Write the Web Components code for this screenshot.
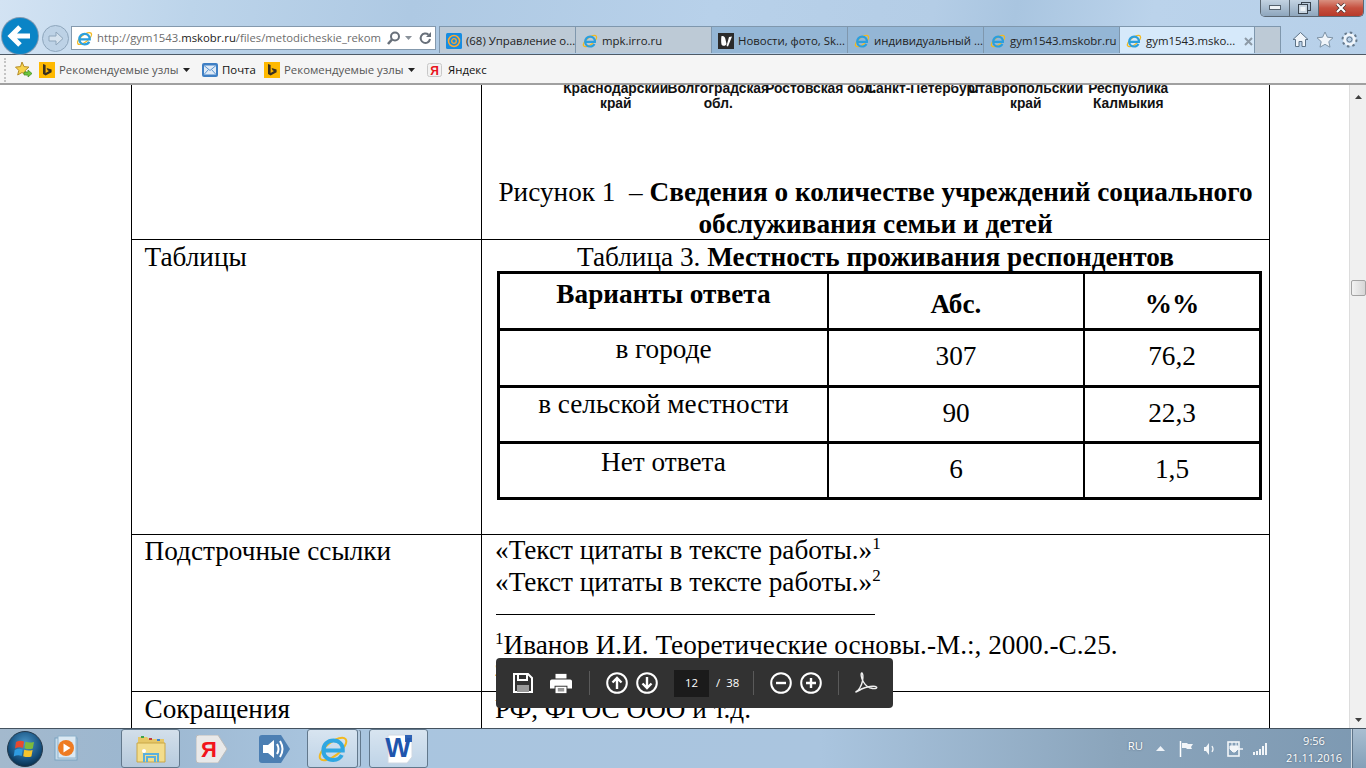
<!DOCTYPE html>
<html lang="ru">
<head>
<meta charset="utf-8">
<title>gym1543.mskobr.ru</title>
<style>
html,body{margin:0;padding:0;height:100%;overflow:hidden;background:#fff}
body{font-family:"Open Sans","Liberation Sans",sans-serif}
</style>
</head>
<body>
<ie-window>
    <ie-toolbar></ie-toolbar>
    <ie-favbar></ie-favbar>
    <doc-view>
        <doc-row style="height:154px">
            <div slot="right" class="chart-block">
                <chart-labels></chart-labels>
                <fig-caption lead="Рисунок 1  – " title1="Сведения о количестве учреждений социального" title2="обслуживания семьи и детей"></fig-caption>
            </div>
        </doc-row>
        <doc-row label="Таблицы" style="height:294px">
            <resp-table slot="right"></resp-table>
        </doc-row>
        <doc-row label="Подстрочные ссылки" style="height:156px;--lab:0">
            <foot-notes slot="right"></foot-notes>
        </doc-row>
        <doc-row label="Сокращения" style="height:40px">
            <plain-text slot="right">РФ, ФГОС ООО и т.д.</plain-text>
        </doc-row>
    </doc-view>
    <pdf-bar></pdf-bar>
    <win-taskbar></win-taskbar>
</ie-window>

<script>
const ieIcon = (s = 16) => `<svg width="${s}" height="${s}" viewBox="0 0 16 16" style="flex:none;display:block">
    <ellipse cx="8" cy="8" rx="8" ry="3.400" transform="rotate(-38 8 8)" fill="none" stroke="#f2b91f" stroke-width="1.200"/>
    <path d="M3.400 8.800h9.500c.2-3-1.800-5.100-4.700-5.100-2.900 0-5 2.100-5 5s2.100 4.800 4.900 4.800c2 0 3.600-1 4.300-2.500" fill="none" stroke="#2b9fdd" stroke-width="2.200"/>
</svg>`

const bingIcon = `<svg width="16" height="16" viewBox="0 0 16 16" style="flex:none;display:block">
    <rect width="16" height="16" fill="#ffb900"/>
    <path d="M4 2l2.600 1v8l3.400-2-1.500-.8-.9-2.300 5 1.700v2.600L6.600 13.500 4 12z" fill="#3a3020"/>
</svg>`

customElements.define("ie-window", class extends HTMLElement{
    constructor(){
        super()
        this.attachShadow({mode: "open"}).innerHTML = `
            <style>
            :host{display:flex;flex-direction:column;position:relative;width:1366px;height:768px;overflow:hidden}
            </style>
            <slot></slot>`
    }
})

customElements.define("ie-toolbar", class extends HTMLElement{
    constructor(){
        super()
        const tabs = [
            {text: "(68) Управление о...", kind: "mail", cls: "idle"},
            {text: "mpk.irro.ru", kind: "ie", cls: "idle"},
            {text: "Новости, фото, Sk...", kind: "sky", cls: "dark"},
            {text: "индивидуальный ...", kind: "ie", cls: "dark"},
            {text: "gym1543.mskobr.ru", kind: "ie", cls: "dark"},
            {text: "gym1543.msko...", kind: "ie", cls: "active"}
        ]
        const icon = {
            ie: ieIcon(),
            mail: `<svg width="16" height="16" viewBox="0 0 16 16" style="flex:none"><rect width="16" height="16" rx="1.500" fill="#168de2"/><circle cx="8" cy="8" r="5.500" fill="none" stroke="#ffa930" stroke-width="1.500"/><circle cx="8" cy="8" r="2.300" fill="none" stroke="#ffa930" stroke-width="1.300"/></svg>`,
            sky: `<svg width="16" height="16" viewBox="0 0 16 16" style="flex:none"><rect width="16" height="16" fill="#2b2b2b"/><path d="M3.500 3c2.500-.5 3.500 1 4 3.500L8.500 11c-.5 2-4 2.500-5 .5C3 9 3 5.500 3.500 3zM11 4l3-.5-4 10-1.500-.5z" fill="#fff"/></svg>`
        }
        let html = ""
        for(let i = 0; i < tabs.length; i++){
            html += `<div class="tab ${tabs[i].cls}">${icon[tabs[i].kind]}<span>${tabs[i].text}</span>${tabs[i].cls === "active" ? `<svg class="x" width="9" height="9" viewBox="0 0 9 9"><path d="M1 1l7 7M8 1L1 8" stroke="#8d9aa6" stroke-width="2"/></svg>` : ""}</div>`
        }
        this.attachShadow({mode: "open"}).innerHTML = `
            <style>
            :host{display:block;position:relative;height:54px;flex:none;border-bottom:1px solid #4e5a66;
                background:linear-gradient(100deg,#d3e3f3 0,#bcd4ea 14%,#aec9e3 30%,#b8d1ea 52%,#b4cde6 68%,#a9c5e0 74%,#bbd3eb 84%,#b7d0e9 100%);
                font:11.400px/16px "Open Sans",sans-serif;color:#1c1c1c}
            .row{position:absolute;left:0;right:0;top:26px;height:28px;display:flex}
            .nav{width:71px;flex:none;position:relative}
            .back{position:absolute;left:2px;top:-8px;width:36px;height:36px;border-radius:50%;background:#0a84c6;box-shadow:0 0 0 1px #7e99b2;overflow:hidden}
            .fwd{position:absolute;left:42px;top:-1px;width:25px;height:25px;border-radius:50%;border:1px solid #8ea6bc;background:#bdd2e6}
            .addr{width:363px;height:22px;flex:none;border:1px solid #8499ad;background:#fff;display:flex;align-items:center;color:#6d6d6d;font-size:11.300px;white-space:nowrap;overflow:hidden}
            .addr .e{margin:0 4px 0 4px}
            .url{width:285px;overflow:hidden}
            .url b{font-weight:400;color:#1a1a1a}
            .ctrl{display:flex;align-items:center;margin-left:5px;gap:4px}
            .tabs{display:flex;margin-left:3px}
            .tab{width:136px;height:27px;border:solid #7f97ad;border-width:1px 0 0 1px;display:flex;align-items:center;gap:4px;padding:2px 0 0 6px;box-sizing:border-box;white-space:nowrap;overflow:hidden;color:#222}
            .idle{background:#bdcad6}
            .dark{background:#94b6d5}
            .active{background:#d6e9fa;width:135px}
            .x{margin-left:5px}
            .new{width:27px;height:27px;background:#bdcad6;border:solid #7f97ad;border-width:1px 1px 0 1px;box-sizing:border-box}
            .tools{display:flex;align-items:center;gap:7px;margin-left:11px;height:27px}
            .caption{position:absolute;right:2px;top:0;height:17px;width:104px;display:flex;border:1px solid #5b6874;border-top:0;border-radius:0 0 5px 5px;overflow:hidden;box-sizing:border-box}
            .caption div{display:flex;align-items:center;justify-content:center;border-right:1px solid #5b6874;background:linear-gradient(#c3d3e2,#8ea6bd)}
            .min,.max{width:28px}
            .caption .close{flex:1;border-right:0;background:linear-gradient(#d99080 0,#c6503f 50%,#b73a2b 100%)}
            </style>
            <div class="caption">
                <div class="min"><svg width="12" height="6"><rect x=".5" y=".5" width="11" height="4" fill="#eef3f7" stroke="#55626e"/></svg></div>
                <div class="max"><svg width="13" height="12"><rect x="3.500" y=".5" width="9" height="8" fill="none" stroke="#39444f"/><rect x=".5" y="2.500" width="9" height="9" fill="#c9d6e2" stroke="#39444f"/><rect x="2.500" y="5" width="5" height="4" fill="#eef3f7"/></svg></div>
                <div class="close"><svg width="12" height="10"><path d="M2 1l8 8M10 1L2 9" stroke="#3b2a28" stroke-width="3.400"/><path d="M2 1l8 8M10 1L2 9" stroke="#fff" stroke-width="2.200"/></svg></div>
            </div>
            <div class="row">
                <div class="nav">
                    <div class="back">
                        <svg width="36" height="36" viewBox="0 0 36 36"><path d="M9 18h19M18 9l-9 9 9 9" fill="none" stroke="#fff" stroke-width="5"/></svg>
                    </div>
                    <div class="fwd">
                        <svg width="25" height="25" viewBox="0 0 25 25"><path d="M6 10h7V6l7 6.500-7 6.500v-4H6z" fill="#d5e2ee" stroke="#8ea6bc"/></svg>
                    </div>
                </div>
                <div class="addr">
                    <span class="e">${ieIcon(17)}</span>
                    <span class="url">http://gym1543.<b>mskobr.ru</b>/files/metodicheskie_rekom</span>
                    <span class="ctrl">
                        <svg width="14" height="14" viewBox="0 0 14 14"><circle cx="8" cy="5.500" r="4" fill="none" stroke="#68707a" stroke-width="2"/><path d="M5 8.500L1 13" stroke="#68707a" stroke-width="2.600"/></svg>
                        <svg width="7" height="4"><path d="M0 0h7L3.500 4z" fill="#8a929a"/></svg>
                        <svg width="13" height="14" viewBox="0 0 13 14" style="margin-left:3px"><path d="M11 8a4.700 4.700 0 1 1-1.500-4.300" fill="none" stroke="#68707a" stroke-width="2"/><path d="M12 1v5H7z" fill="#68707a"/></svg>
                    </span>
                </div>
                <div class="tabs">${html}<div class="new"></div></div>
                <div class="tools">
                    <svg width="17" height="17" viewBox="0 0 17 17"><path d="M8.500 1.500L1 8.500h2.500V15.500h3.500v-5h3v5h3.500V8.500H16z" fill="#f0f5fa" stroke="#5e7387"/></svg>
                    <svg width="18" height="17" viewBox="0 0 18 17"><path d="M9 1l2.400 5.200 5.600.6-4.200 3.800 1.200 5.600L9 13.300l-5 2.900 1.200-5.600L1 6.800l5.600-.6z" fill="#f0f5fa" stroke="#7e93a6"/></svg>
                    <svg width="17" height="17" viewBox="0 0 17 17"><circle cx="8.500" cy="8.500" r="5" fill="none" stroke="#f0f5fa" stroke-width="3"/><circle cx="8.500" cy="8.500" r="7" fill="none" stroke="#66798b" stroke-width="2" stroke-dasharray="2.500 3"/><circle cx="8.500" cy="8.500" r="2.500" fill="none" stroke="#66798b"/></svg>
                </div>
            </div>`
    }
})

customElements.define("ie-favbar", class extends HTMLElement{
    constructor(){
        super()
        const caret = `<svg width="7" height="4"><path d="M0 0h7L3.500 4z" fill="#222"/></svg>`
        this.attachShadow({mode: "open"}).innerHTML = `
            <style>
            :host{display:flex;align-items:center;height:27px;padding:1px 0 0 4px;flex:none;background:#f5f5f5;border-bottom:2px solid #a0a0a0;font:11.400px/16px "Open Sans",sans-serif;color:#555;white-space:nowrap}
            .grip{width:0;height:24px;border-left:2px dotted #c4c4c4;margin-right:9px}
            .item{display:flex;align-items:center;gap:4px}
            .dark{color:#111}
            svg text{font:bold 12px "Liberation Sans",sans-serif;fill:#e8141c}
            </style>
            <div class="grip"></div>
            <svg width="17" height="17" viewBox="0 0 17 17" style="margin-right:7px"><path d="M7 1l2 4.600 5 .5-3.700 3.300L11.500 14 7 11.500 2.700 14l1.100-4.600L.5 6.100l5-.5z" fill="#f8d34c" stroke="#b58d2a"/><path d="M9 11h4V9l4 3.500-4 3.500v-2H9z" fill="#6cc43c" stroke="#3f8a1f" stroke-width=".7"/></svg>
            <div class="item" style="width:163px">${bingIcon}<span>Рекомендуемые узлы</span>${caret}</div>
            <div class="item dark" style="width:62px">
                <svg width="16" height="16" viewBox="0 0 16 16"><rect y="1" width="16" height="14" rx="2" fill="#3f7fc4"/><rect x="2" y="3.500" width="12" height="9" fill="#dfeaf6"/><path d="M2 3.500l6 5 6-5M2 12.500l4.500-5M14 12.500l-4.500-5" fill="none" stroke="#5b94cf"/></svg>
                <span>Почта</span>
            </div>
            <div class="item" style="width:163px">${bingIcon}<span>Рекомендуемые узлы</span>${caret}</div>
            <div class="item dark" style="gap:6px">
                <svg width="15" height="16" viewBox="0 0 15 16"><rect x=".5" y="1.500" width="14" height="13" rx="2" fill="#f2f2f2" stroke="#c8c8c8"/><text x="7.500" y="12.500" text-anchor="middle">Я</text></svg>
                <span>Яндекс</span>
            </div>`
    }
})

customElements.define("doc-view", class extends HTMLElement{
    constructor(){
        super()
        this.attachShadow({mode: "open"}).innerHTML = `
            <style>
            :host{display:flex;flex:1;min-height:0;overflow:hidden;background:#fff;font:27.250px/32px "Liberation Serif",serif;color:#000}
            .page{width:1349px;flex:none;overflow:hidden}
            .sheet{margin-left:131px;width:1139px;box-sizing:border-box;border-left:1px solid #000;border-right:1px solid #000;min-height:700px}
            .bar{flex:1;background:#f0f0f0;border-left:1px solid #ddd;display:flex;flex-direction:column;align-items:center}
            .thumb{width:15px;height:16px;margin-top:181px;box-sizing:border-box;border:1px solid #a2a2a2;border-radius:2px;background:linear-gradient(90deg,#f2f2f2,#d6d6d6)}
            .up{margin-top:10px;flex:none}
            .down{margin:auto 0 6px;flex:none}
            </style>
            <div class="page"><div class="sheet"><slot></slot></div></div>
            <div class="bar">
                <svg class="up" width="7" height="4"><path d="M3.500 0L7 4H0z" fill="#3f3f3f"/></svg>
                <div class="thumb"></div>
                <svg class="down" width="7" height="4"><path d="M0 0h7L3.500 4z" fill="#3f3f3f"/></svg>
            </div>`
    }
})

customElements.define("doc-row", class extends HTMLElement{
    constructor(){
        super()
        this.attachShadow({mode: "open"}).innerHTML = `
            <style>
            :host{display:grid;grid-template-columns:350px 1fr;border-bottom:1px solid #000;overflow:hidden}
            .left{padding:var(--lab,1px) 0 0 12.500px;border-right:1px solid #000;white-space:nowrap}
            .right{min-width:0;overflow:hidden}
            </style>
            <div class="left">${this.getAttribute("label") || ""}</div>
            <div class="right"><slot name="right"></slot></div>`
    }
})

customElements.define("chart-labels", class extends HTMLElement{
    constructor(){
        super()
        const labels = [
            ["Краснодарский", "край"], ["Волгоградская", "обл."], ["Ростовская обл."],
            ["Санкт-Петербург"], ["Ставропольский", "край"], ["Республика", "Калмыкия"]
        ]
        let html = ""
        for(let i = 0; i < labels.length; i++){
            html += `<div class="cell">${labels[i].map(t => `<span>${t}</span>`).join("")}</div>`
        }
        this.attachShadow({mode: "open"}).innerHTML = `
            <style>
            :host{display:flex;height:71px;margin:-4px 0 0 82.500px;font:bold 13.800px/15px "Liberation Sans",sans-serif;color:#111}
            .cell{width:102.500px;flex:none;display:flex;flex-direction:column;align-items:center;white-space:nowrap}
            </style>
            ${html}`
    }
})

customElements.define("fig-caption", class extends HTMLElement{
    constructor(){
        super()
        this.attachShadow({mode: "open"}).innerHTML = `
            <style>
            :host{display:block;text-align:center;margin-top:24px}
            .lead{white-space:pre}
            b{font-weight:700;white-space:nowrap}
            </style>
            <span class="lead">${this.getAttribute("lead")}</span><b>${this.getAttribute("title1")}</b><br><b>${this.getAttribute("title2")}</b>`
    }
})

customElements.define("resp-table", class extends HTMLElement{
    constructor(){
        super()
        const rows = [["в городе", "307", "76,2", 2], ["в сельской местности", "90", "22,3", 0], ["Нет ответа", "6", "1,5", 2]]
        let html = ""
        for(let i = 0; i < rows.length; i++){
            html += `<div class="c" style="padding-top:${rows[i][3]}px">${rows[i][0]}</div><div class="c mid">${rows[i][1]}</div><div class="c mid end">${rows[i][2]}</div>`
        }
        this.attachShadow({mode: "open"}).innerHTML = `
            <style>
            :host{display:block;padding:1px 0 0 0}
            .cap{text-align:center;height:30px;white-space:nowrap}
            b{font-weight:700}
            .grid{display:grid;grid-template-columns:329px 256px 174px;grid-template-rows:57px 57px 56px 56px;margin-left:15px;width:765px;box-sizing:border-box;border:3px solid #000;border-bottom:0}
            .c{border-right:2px solid #000;border-bottom:3px solid #000;text-align:center;box-sizing:border-box;white-space:nowrap}
            .mid{display:flex;align-items:center;justify-content:center;padding-bottom:4px}
            .end{border-right:0}
            .head{padding-top:4px}
            .head.mid{padding:6px 0 0}
            </style>
            <div class="cap">Таблица 3. <b>Местность проживания респондентов</b></div>
            <div class="grid">
                <div class="c head"><b>Варианты ответа</b></div><div class="c mid head"><b>Абс.</b></div><div class="c mid end head"><b>%%</b></div>
                ${html}
            </div>`
    }
})

customElements.define("foot-notes", class extends HTMLElement{
    constructor(){
        super()
        this.attachShadow({mode: "open"}).innerHTML = `
            <style>
            :host{display:block;padding:0 0 0 13px;margin-top:-1px;white-space:nowrap}
            sup{font-size:17px;line-height:0;vertical-align:10px}
            .rule{width:379px;height:1px;background:#000;margin:16px 0 14px 1px}
            </style>
            <div>«Текст цитаты в тексте работы.»<sup>1</sup></div>
            <div>«Текст цитаты в тексте работы.»<sup>2</sup></div>
            <div class="rule"></div>
            <div><sup>1</sup>Иванов И.И. Теоретические основы.-М.:, 2000.-С.25.</div>
            <div><sup>2</sup></div>`
    }
})

customElements.define("plain-text", class extends HTMLElement{
    constructor(){
        super()
        this.attachShadow({mode: "open"}).innerHTML = `
            <style>:host{display:block;padding:1px 0 0 13px;white-space:nowrap}</style>
            <slot></slot>`
    }
})

customElements.define("pdf-bar", class extends HTMLElement{
    constructor(){
        super()
        const round = inner => `<svg width="22" height="22" viewBox="0 0 22 22" style="display:block"><circle cx="11" cy="11" r="9.800" fill="none" stroke="#fff" stroke-width="2"/>${inner}</svg>`
        this.attachShadow({mode: "open"}).innerHTML = `
            <style>
            :host{position:absolute;left:496px;top:658px;width:397px;height:50px;box-sizing:border-box;background:#323232;border-radius:4px;display:flex;align-items:center;padding-left:17px;color:#fff;font:11.400px/16px "Open Sans",sans-serif}
            .sep{width:1px;height:24px;background:#5a5a5a;flex:none}
            .page{width:35px;height:27px;background:#1b1b1b;display:flex;align-items:center;justify-content:center;margin-left:16px}
            .of{margin-left:7px;width:37px;word-spacing:3px;white-space:pre}
            </style>
            <svg width="20" height="20" viewBox="0 0 20 20" style="margin-right:17px"><path d="M1 1h14l4 4v14H1z" fill="none" stroke="#fff" stroke-width="2"/><path d="M5 1h9v6H5z" fill="none" stroke="#fff" stroke-width="2"/><path d="M4 12h12v7H4z" fill="#9a9a9a"/></svg>
            <svg width="22" height="21" viewBox="0 0 24 21" style="margin-right:17px"><path d="M6 0h12v5H6z" fill="#fff"/><path d="M2 6h20q2 0 2 2v8h-5v-3H5v3H0V8q0-2 2-2z" fill="#fff"/><path d="M6 14h12v7H6z" fill="#fff"/><path d="M8.500 16h7v1h-7zM8.500 18h7v1h-7z" fill="#323232"/></svg>
            <div class="sep"></div>
            <span style="margin-left:16px;display:flex;gap:8px">
                ${round(`<path d="M11 17V6M6.500 10.500L11 6l4.500 4.500" fill="none" stroke="#fff" stroke-width="2.400"/>`)}
                ${round(`<path d="M11 5v11M6.500 11.500L11 16l4.500-4.500" fill="none" stroke="#fff" stroke-width="2.400"/>`)}
            </span>
            <div class="page">12</div>
            <div class="of">/ 38</div>
            <div class="sep"></div>
            <span style="margin-left:16px;display:flex;gap:8px">
                ${round(`<path d="M6 11h10" stroke="#fff" stroke-width="2.400"/>`)}
                ${round(`<path d="M6 11h10M11 6v10" stroke="#fff" stroke-width="2.400"/>`)}
            </span>
            <div class="sep" style="margin-left:16px"></div>
            <svg width="24" height="24" viewBox="0 0 24 24" style="margin-left:15px"><path d="M1.500 21c3-1 6-6 7-11 .5-3 .5-7-.5-8-1.500-.5-1 5 1.500 9 2 3.500 5 6 9 6.500 3 .5 5-.5 4-1.500-2-1.500-10-.5-15 2-3 1.500-5 3-5.500 3z" fill="none" stroke="#f0f0f0" stroke-width="1.400"/></svg>`
    }
})

customElements.define("win-taskbar", class extends HTMLElement{
    constructor(){
        super()
        this.attachShadow({mode: "open"}).innerHTML = `
            <style>
            :host{display:flex;align-items:stretch;height:40px;flex:none;box-sizing:border-box;border-top:1px solid #44525f;position:relative;
                background:linear-gradient(90deg,#a3b9cd 0,#9cb7d0 10%,#a9c5df 24%,#aac5df 60%,#8aa4bb 82%,#7d99b2 100%);
                font:11.400px/17px "Open Sans",sans-serif;color:#fff;padding-left:5px}
            .orb{width:40px;flex:none;display:flex;align-items:center;justify-content:center}
            .slot{display:flex;align-items:center;justify-content:center;flex:none}
            .btn{box-sizing:border-box;border:1px solid #62788c;border-radius:3px;background:linear-gradient(rgba(255,255,255,.55),rgba(255,255,255,.25))}
            .tray{margin-left:auto;display:flex;align-items:center}
            .clock{text-align:center;width:66px;margin-left:13px;font-size:11px;text-shadow:0 0 2px #49596a}
            .show{width:14px;margin-left:4px;align-self:stretch;background:linear-gradient(#a9bed1,#84a0b8);border-left:1px solid #cfdbe5;box-shadow:inset 1px 0 0 #5f7488}
            .ru{margin-right:13px;text-shadow:0 0 2px #49596a;position:relative;top:-3px}
            .ya{font:bold 22px "Liberation Sans",sans-serif;fill:#f2141c}
            .wd{font:bold 27px "Liberation Sans",sans-serif;fill:#1f55ad}
            </style>
            <div class="orb">
                <svg width="38" height="36" viewBox="0 0 38 36">
                    <defs><radialGradient id="o" cx=".5" cy=".35" r=".7"><stop offset="0" stop-color="#4b98c9"/><stop offset=".65" stop-color="#17517f"/><stop offset="1" stop-color="#06273f"/></radialGradient></defs>
                    <circle cx="19" cy="18" r="17.500" fill="url(#o)" stroke="#24394b"/>
                    <path d="M10 11q4-2 8-.5l-1 6.500q-4-1.500-8 .5z" fill="#e8492f"/>
                    <path d="M19.500 10.800q4 1.500 8.500.2l-1.200 6.500q-4 1.300-8.300-.3z" fill="#7dbb3c"/>
                    <path d="M8.700 19q4-2 8-.5l-1 6.500q-4-1.500-8 .5z" fill="#2f9be0"/>
                    <path d="M18.200 18.800q4 1.500 8.400.2l-1.200 6.500q-4 1.300-8.200-.3z" fill="#f7c42c"/>
                </svg>
            </div>
            <div class="slot" style="width:31px;margin-right:40px;margin-left:5px">
                <svg width="28" height="28" viewBox="0 0 28 28"><rect x="3" y="3" width="22" height="22" fill="#c8dceb" stroke="#7ba2bf"/><rect x="6" y="1" width="18" height="22" fill="#dbe9f3" stroke="#8eb2cc"/><circle cx="14" cy="13" r="8" fill="#ee7b22"/><path d="M11.500 8.500l7 4.500-7 4.500z" fill="#fff"/></svg>
            </div>
            <div class="slot btn" style="width:59px">
                <svg width="32" height="30" viewBox="0 0 32 30"><path d="M3 3h9l2 2h15v6H3z" fill="#e6c767"/><rect x="6" y="2" width="3" height="2" fill="#3fa34a"/><rect x="14" y="4" width="3" height="2" fill="#c23b3b"/><rect x="22" y="5" width="3" height="2" fill="#3b82d0"/><path d="M2 9h28v19H2z" fill="#f3dd8c" stroke="#c9a748"/><path d="M9 28v-8h14v8M12 28v-5h8v5" fill="none" stroke="#5ab0dc" stroke-width="2"/><circle cx="9" cy="17" r="2" fill="#fff"/></svg>
            </div>
            <div class="slot" style="width:32px;margin-left:16px">
                <svg width="32" height="28" viewBox="0 0 32 28"><path d="M3 0h19l9 14-9 14H3q-3 0-3-3V3q0-3 3-3z" fill="#e9e9e9" stroke="#bbb"/><text class="ya" x="13" y="22" text-anchor="middle">Я</text></svg>
            </div>
            <div class="slot" style="width:32px;margin-left:31px">
                <svg width="32" height="28" viewBox="0 0 32 28"><path d="M3 0h19l9 14-9 14H3q-3 0-3-3V3q0-3 3-3z" fill="#4c7fb3"/><path d="M4 10h5l6-5v18l-6-5H4z" fill="#fff"/><path d="M18 9q3 5 0 10M21 6q5 8 0 16" fill="none" stroke="#fff" stroke-width="2"/></svg>
            </div>
            <div class="slot btn" style="width:51px;margin-left:16px;box-shadow:3px 0 0 -1px #b7cde1,4px 0 0 -1px #62788c">
                <svg width="32" height="32" viewBox="0 0 16 16"><ellipse cx="8" cy="8" rx="8" ry="3.400" transform="rotate(-38 8 8)" fill="none" stroke="#f2b91f" stroke-width="1"/><path d="M3.400 8.800h9.500c.2-3-1.800-5.100-4.700-5.100-2.900 0-5 2.100-5 5s2.100 4.800 4.900 4.800c2 0 3.600-1 4.300-2.500" fill="none" stroke="#2fa7e2" stroke-width="2"/></svg>
            </div>
            <div class="slot btn" style="width:59px;margin-left:11px">
                <svg width="32" height="30" viewBox="0 0 32 30" style="display:block"><path d="M5 1h24v22l-5 6H5z" fill="#fff" stroke="#d0d8e2"/><rect x="22" y="1" width="7" height="7" fill="#2d62b5"/><text class="wd" x="15" y="23" text-anchor="middle">W</text></svg>
            </div>
            <div class="tray">
                <span class="ru">RU</span>
                <svg width="9" height="6" style="margin-right:14px"><path d="M4.500 0L9 5H0z" fill="#eef3f8"/></svg>
                <svg width="15" height="16" viewBox="0 0 15 16" style="margin-right:9px"><path d="M1.500 0v16" stroke="#fff" stroke-width="1.500"/><path d="M3 2h5l1 1h5l-2 3 1 2H8L7 7H3z" fill="#f2f5f8"/></svg>
                <svg width="13" height="14" viewBox="0 0 13 14" style="margin-right:11px"><path d="M1 5h2l3-4v12L3 9H1z" fill="#f2f5f8"/><path d="M9 4q2 3 0 6" fill="none" stroke="#f2f5f8" stroke-width="1.300"/></svg>
                <svg width="16" height="16" viewBox="0 0 16 16" style="margin-right:9px"><rect x="1" y="1" width="11" height="14" fill="none" stroke="#f2f5f8" stroke-width="1.600"/><path d="M5 1v4M9 1v4M3 5h8v3L8 11H6L3 8z" fill="#f2f5f8" stroke="#f2f5f8"/><path d="M11 8h5" stroke="#f2f5f8" stroke-width="1.500"/></svg>
                <svg width="16" height="12" viewBox="0 0 16 12"><path d="M1 9h2v3H1zM4 8h2v4H4zM7 6h2v6H7zM10 3h2v9h-2zM13 0h2v12h-2z" fill="#f2f5f8"/></svg>
                <div class="clock">9:56<br>21.11.2016</div>
                <div class="show"></div>
            </div>`
    }
})
</script>
</body>
</html>
